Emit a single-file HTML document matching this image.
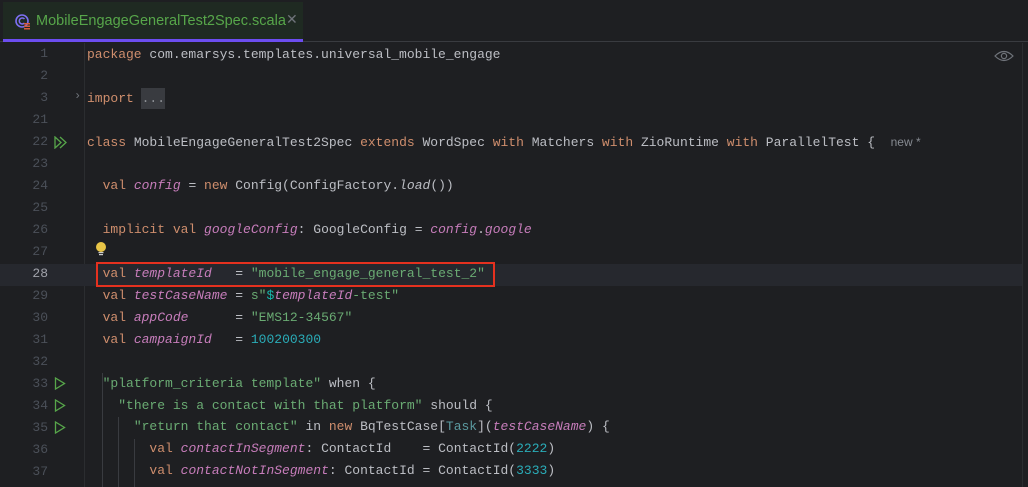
<!DOCTYPE html>
<html><head><meta charset="utf-8"><style>
*{margin:0;padding:0;box-sizing:border-box}
body{width:1028px;height:487px;overflow:hidden;background:#1e1f22;font-family:"Liberation Mono",monospace;font-size:13px;position:relative;color:#bcbec4}
.tabbar{position:absolute;left:0;top:0;width:1028px;height:42px;background:#1e1f22;border-bottom:1px solid #393b40}
.tab{position:absolute;left:3px;top:2px;width:300px;height:40px;background:#1f2a22;border-bottom:3px solid #6c4df0}
.tab .t{position:absolute;left:33px;top:11px;font-family:"Liberation Sans",sans-serif;font-size:14.5px;color:#57a64a}
.tab .x{position:absolute;left:283px;top:9px;font-family:"Liberation Sans",sans-serif;font-size:14px;color:#6f737a}
.ln{position:absolute;width:48px;text-align:right;color:#4b5059;font-size:13px}
.code{position:absolute;left:87px;white-space:pre;line-height:21.9px}
.k{color:#cf8e6d}.p{color:#c77dbb;font-style:italic}.s{color:#6aab73}.n{color:#2aacb8}.g{color:#868a91;font-family:"Liberation Sans",sans-serif;font-size:12px}.ty{color:#16baac}
.guide{position:absolute;width:1px;background:#393b40}
.run{position:absolute;left:54px}
</style></head><body>
<div class="tabbar"><div class="tab">
<svg style="position:absolute;left:12px;top:12px" width="16" height="16" viewBox="0 0 16 16"><circle cx="7" cy="7" r="6" fill="none" stroke="#7d6ff2" stroke-width="1.6"/><path d="M9.5 5 A3 3 0 1 0 9.5 9" fill="none" stroke="#7d6ff2" stroke-width="1.5"/><rect x="9" y="9" width="6" height="1.5" fill="#d65a3a"/><rect x="9" y="11.5" width="6" height="1.5" fill="#d65a3a"/><rect x="9" y="14" width="6" height="1.5" fill="#d65a3a"/></svg>
<span class="t">MobileEngageGeneralTest2Spec.scala</span><span class="x">✕</span></div></div>
<div style="position:absolute;left:84px;top:43px;width:1px;height:444px;background:#2b2d30"></div>
<div style="position:absolute;left:1022px;top:43px;width:1px;height:444px;background:#2b2d30"></div>
<svg style="position:absolute;left:994px;top:49px" width="20" height="14" viewBox="0 0 20 14"><path d="M1 7 Q10 -2 19 7 Q10 16 1 7Z" fill="none" stroke="#6f737a" stroke-width="1.2"/><circle cx="10" cy="7" r="2.6" fill="none" stroke="#6f737a" stroke-width="1.2"/></svg>
<div style="position:absolute;left:0;top:264px;width:1022px;height:22px;background:#26282e"></div>
<div class="guide" style="left:102px;top:373px;height:114px"></div>
<div class="guide" style="left:118px;top:417px;height:70px"></div>
<div class="guide" style="left:134px;top:439px;height:48px"></div>
<div class="ln" style="top:46px">1</div>
<div class="ln" style="top:68px">2</div>
<div class="ln" style="top:90px">3</div>
<div class="ln" style="top:112px">21</div>
<div class="ln" style="top:134px">22</div>
<div class="ln" style="top:156px">23</div>
<div class="ln" style="top:178px">24</div>
<div class="ln" style="top:200px">25</div>
<div class="ln" style="top:222px">26</div>
<div class="ln" style="top:244px">27</div>
<div class="ln" style="top:266px;color:#a1a3ab">28</div>
<div class="ln" style="top:288px">29</div>
<div class="ln" style="top:310px">30</div>
<div class="ln" style="top:332px">31</div>
<div class="ln" style="top:354px">32</div>
<div class="ln" style="top:376px">33</div>
<div class="ln" style="top:398px">34</div>
<div class="ln" style="top:420px">35</div>
<div class="ln" style="top:442px">36</div>
<div class="ln" style="top:464px">37</div>
<span style="position:absolute;left:74px;top:89px;color:#6f737a;font-size:12px">›</span>
<svg class="run" style="top:136px" width="14" height="13" viewBox="0 0 14 13"><path d="M1 1L7 6.5L1 12Z M6 1L12 6.5L6 12" fill="none" stroke="#57a64a" stroke-width="1.3"/></svg>
<svg class="run" style="top:377px" width="12" height="13" viewBox="0 0 12 13"><path d="M1.5 1L10.5 6.5L1.5 12Z" fill="none" stroke="#57a64a" stroke-width="1.3"/></svg>
<svg class="run" style="top:399px" width="12" height="13" viewBox="0 0 12 13"><path d="M1.5 1L10.5 6.5L1.5 12Z" fill="none" stroke="#57a64a" stroke-width="1.3"/></svg>
<svg class="run" style="top:421px" width="12" height="13" viewBox="0 0 12 13"><path d="M1.5 1L10.5 6.5L1.5 12Z" fill="none" stroke="#57a64a" stroke-width="1.3"/></svg>
<svg style="position:absolute;left:95px;top:241px" width="12" height="16" viewBox="0 0 12 16"><circle cx="6" cy="6" r="5" fill="#e8c547"/><rect x="3.5" y="11" width="5" height="1.2" fill="#ccc"/><rect x="4" y="13" width="4" height="1.2" fill="#ccc"/></svg>
<div style="position:absolute;left:141px;top:88px;width:24px;height:21px;background:#393b40"></div>
<div class="code" style="top:44px"><span class="k">package</span> com.emarsys.templates.universal_mobile_engage

<span class="k">import</span> <span style="color:#8c8f94">...</span>

<span class="k">class</span> MobileEngageGeneralTest2Spec <span class="k">extends</span> WordSpec <span class="k">with</span> Matchers <span class="k">with</span> ZioRuntime <span class="k">with</span> ParallelTest {  <span class="g">new *</span>

  <span class="k">val</span> <span class="p">config</span> = <span class="k">new</span> Config(ConfigFactory.<i>load</i>())

  <span class="k">implicit val</span> <span class="p">googleConfig</span>: GoogleConfig = <span class="p">config</span>.<span class="p">google</span>

  <span class="k">val</span> <span class="p">templateId</span>   = <span class="s">"mobile_engage_general_test_2"</span>
  <span class="k">val</span> <span class="p">testCaseName</span> = <span class="s">s"</span><span class="ty">$</span><span class="p">templateId</span><span class="s">-test"</span>
  <span class="k">val</span> <span class="p">appCode</span>      = <span class="s">"EMS12-34567"</span>
  <span class="k">val</span> <span class="p">campaignId</span>   = <span class="n">100200300</span>

  <span class="s">"platform_criteria template"</span> when {
    <span class="s">"there is a contact with that platform"</span> should {
      <span class="s">"return that contact"</span> in <span class="k">new</span> BqTestCase[<span style="color:#5b9aa0">Task</span>](<span class="p">testCaseName</span>) {
        <span class="k">val</span> <span class="p">contactInSegment</span>: ContactId    = ContactId(<span class="n">2222</span>)
        <span class="k">val</span> <span class="p">contactNotInSegment</span>: ContactId = ContactId(<span class="n">3333</span>)</div>
<div style="position:absolute;left:96px;top:262px;width:399px;height:25px;border:2px solid #e5311f"></div>
</body></html>
